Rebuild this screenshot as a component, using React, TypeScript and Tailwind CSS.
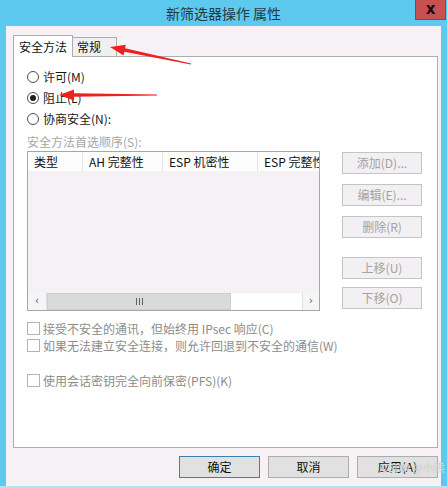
import React from 'react';

const FONT = { fontFamily: '"Noto Sans CJK SC", "Noto Sans", sans-serif' };

type Pt = [number, number];

// red annotation arrow, tapering shaft + triangle head
const arrowPoints = (tail: Pt, tip: Pt) => {
  const dx = tip[0] - tail[0];
  const dy = tip[1] - tail[1];
  const len = Math.hypot(dx, dy);
  const ux = dx / len;
  const uy = dy / len;
  const nx = -uy;
  const ny = ux;
  const bx = tip[0] - ux * 15;
  const by = tip[1] - uy * 15;
  const pts: Pt[] = [
    tip,
    [bx + nx * 5.5, by + ny * 5.5],
    [bx + nx * 1.8, by + ny * 1.8],
    [tail[0] + nx * 0.4, tail[1] + ny * 0.4],
    [tail[0] - nx * 0.4, tail[1] - ny * 0.4],
    [bx - nx * 1.8, by - ny * 1.8],
    [bx - nx * 5.5, by - ny * 5.5],
  ];
  return pts.map(p => p.join(',')).join(' ');
};

const Radio = ({ label, checked }: { label: string; checked?: boolean }) => (
  <div className="flex items-center h-[21px]">
    <span className="w-[12px] h-[12px] rounded-full border border-[#4d4d4d] bg-white flex items-center justify-center">
      {checked && <span className="w-[6px] h-[6px] rounded-full bg-[#1f1f1f]" />}
    </span>
    <span className="ml-[4px] text-[12px] text-[#1a1a1a]">{label}</span>
  </div>
);

const Check = ({ label, className = '' }: { label: string; className?: string }) => (
  <div className={`flex items-center h-[17px] ${className}`}>
    <span className="w-[13px] h-[13px] border border-[#b4b4b4] bg-white" />
    <span className="ml-[3px] text-[12px] text-[#8c8c8c]">{label}</span>
  </div>
);

const SideButton = ({ label, className = '' }: { label: string; className?: string }) => (
  <div
    className={`w-[80px] h-[22px] border border-[#c4c4c4] bg-[#f2f0f2] flex items-center justify-center text-[12px] text-[#a3a3a3] ${className}`}
  >
    {label}
  </div>
);

const BottomButton = ({ label, primary }: { label: string; primary?: boolean }) => (
  <div
    className={`w-[81px] h-[22px] border flex items-center justify-center text-[12px] text-[#111] bg-[#e1e1e1] ${
      primary ? 'border-[#3c7fb1]' : 'border-[#adadad]'
    }`}
  >
    {label}
  </div>
);

const columns = [
  { label: '类型', w: 'w-[55px]' },
  { label: 'AH 完整性', w: 'w-[80px]' },
  { label: 'ESP 机密性', w: 'w-[95px]' },
  { label: 'ESP 完整性', w: 'w-[70px]' },
];

export default function App() {
  return (
    <div className="relative w-[447px] h-[487px] bg-[#5ec9ef] flex flex-col overflow-hidden" style={FONT}>
      {/* title bar */}
      <div className="h-[26px] flex items-center justify-center">
        <span className="text-[14px] text-[#253842] mt-[1px]">新筛选器操作 属性</span>
      </div>
      <div className="absolute top-0 right-[1px] w-[31px] h-[20px] bg-[#c75050] border-x border-b border-[#9c3d3d] flex items-center justify-center">
        <span className="text-[15px] font-bold text-[#111] leading-none" style={{ fontFamily: '"DejaVu Sans", sans-serif' }}>
          x
        </span>
      </div>

      {/* client area */}
      <div className="flex-1 ml-[6px] mr-[6px] mb-[1px] bg-[#f5f1f5] flex flex-col">
        {/* tabs */}
        <div className="pt-[8px] pl-[7px] flex items-end h-[30px]">
          <div className="relative z-10 w-[60px] h-[22px] bg-white border-x border-t border-[#adadad] flex items-center justify-center -mb-[1px] text-[12px] text-[#111]">
            安全方法
          </div>
          <div className="w-[44px] h-[19px] bg-[#f0f0f0] border-r border-t border-[#adadad] flex items-center pl-[4px] text-[12px] text-[#111]">
            常规
          </div>
        </div>

        {/* tab panel */}
        <div className="ml-[7px] w-[425px] h-[392px] bg-white border border-[#adadad] flex flex-col pl-[13px] pt-[9px]">
          <Radio label="许可(M)" />
          <Radio label="阻止(L)" checked />
          <Radio label="协商安全(N):" />

          <div className="mt-[4px] h-[18px] text-[12px] text-[#a6a6a6] flex items-center">安全方法首选顺序(S):</div>

          <div className="flex">
            {/* list view */}
            <div className="w-[293px] h-[160px] border border-[#a7a7a7] bg-[#f5f1f5] flex flex-col overflow-hidden">
              <div className="h-[19px] bg-[#fdfdfd] flex shrink-0">
                {columns.map(c => (
                  <div
                    key={c.label}
                    className={`${c.w} shrink-0 border-r border-[#e5e5e5] flex items-center pl-[6px] text-[12px] text-[#111] whitespace-nowrap overflow-hidden`}
                  >
                    {c.label}
                  </div>
                ))}
              </div>
              <div className="flex-1" />
              <div className="h-[17px] flex shrink-0">
                <div className="w-[19px] bg-[#f5f5f5] border-r border-[#e0e0e0] flex items-center justify-center text-[11px] text-[#606060]" style={{ fontFamily: '"DejaVu Sans", sans-serif' }}>
                  ‹
                </div>
                <div className="w-[184px] bg-[#dadada] border border-[#cfcfcf] flex items-center justify-center">
                  <span className="flex gap-[2px]">
                    <span className="w-[1px] h-[7px] bg-[#606060]" />
                    <span className="w-[1px] h-[7px] bg-[#606060]" />
                    <span className="w-[1px] h-[7px] bg-[#606060]" />
                  </span>
                </div>
                <div className="flex-1 bg-white" />
                <div className="w-[17px] bg-[#f5f5f5] border-l border-[#e0e0e0] flex items-center justify-center text-[11px] text-[#606060]" style={{ fontFamily: '"DejaVu Sans", sans-serif' }}>
                  ›
                </div>
              </div>
            </div>

            {/* side buttons */}
            <div className="ml-[22px] flex flex-col">
              <SideButton label="添加(D)..." className="mt-[1px]" />
              <SideButton label="编辑(E)..." className="mt-[10px]" />
              <SideButton label="删除(R)" className="mt-[10px]" />
              <SideButton label="上移(U)" className="mt-[19px]" />
              <SideButton label="下移(O)" className="mt-[8px]" />
            </div>
          </div>

          <Check label="接受不安全的通讯，但始终用 IPsec 响应(C)" className="mt-[9px]" />
          <Check label="如果无法建立安全连接，则允许回退到不安全的通信(W)" />
          <Check label="使用会话密钥完全向前保密(PFS)(K)" className="mt-[18px]" />
        </div>

        {/* dialog buttons */}
        <div className="mt-[8px] flex justify-end pr-[3px] gap-[8px]">
          <BottomButton label="确定" primary />
          <BottomButton label="取消" />
          <BottomButton label="应用(A)" />
        </div>
      </div>
      <div className="h-[1px] bg-[#b7e3f7] absolute bottom-0 left-0 right-0" />

      {/* watermark */}
      <div className="absolute left-[381px] top-[459px] text-[11px] text-white/70" style={{ textShadow: '0 0 1px #9a9a9a' }}>
        CSDN @小熊
      </div>

      {/* red annotation arrows */}
      <svg className="absolute inset-0 pointer-events-none" width={447} height={487}>
        <polygon points={arrowPoints([191, 64], [110, 47])} fill="#f0201e" />
        <polygon points={arrowPoints([157, 95], [59, 95])} fill="#f0201e" />
      </svg>
    </div>
  );
}
